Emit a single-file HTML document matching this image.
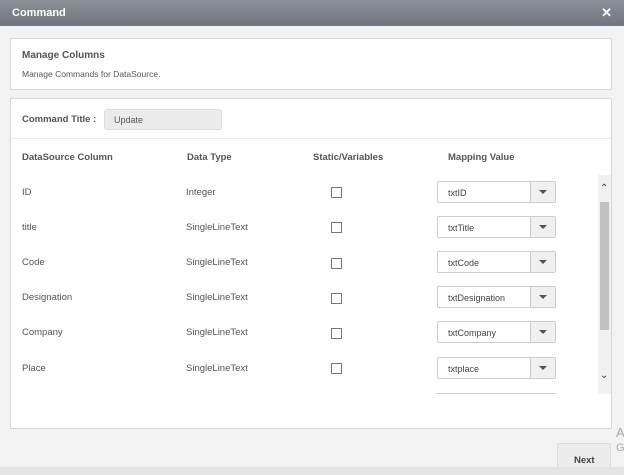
<!DOCTYPE html>
<html><head><style>
*{margin:0;padding:0;box-sizing:border-box}
body{width:624px;height:475px;overflow:hidden;background:#f3f3f3;font-family:"Liberation Sans",sans-serif;color:#555;position:relative}
.hdr{position:absolute;left:0;top:0;width:624px;height:26px;background:linear-gradient(#8a8f98,#6f747e);color:#fff;font-size:11px;font-weight:bold}
.hdr span{position:absolute;left:12px;top:7px}
.hdr b{position:absolute;right:12px;top:5px;font-size:13px}
.p{position:absolute;left:10px;width:602px;background:#fff;border:1px solid #d6d6d6;border-radius:2px}
.t{position:absolute;font-size:9.5px;white-space:nowrap}
.h{font-weight:bold;color:#555}
.cb{position:absolute;left:331px;width:11px;height:11px;border:1px solid #777;background:#fff}
.dd{position:absolute;left:437px;width:119px;height:22px;border:1px solid #ccc;border-radius:2px;background:#fff}
.dd span{position:absolute;left:10px;top:6px;font-size:9px;color:#444}
.dd i{position:absolute;right:0;top:0;width:25px;height:20px;background:#f0f0f0;border-left:1px solid #ccc}
.dd i:after{content:"";position:absolute;left:8px;top:8px;border-left:4px solid transparent;border-right:4px solid transparent;border-top:4px solid #555}
</style></head><body>
<div class="hdr"><span>Command</span><b>✕</b></div>
<div class="p" style="top:38px;height:52px">
<div class="t h" style="left:11px;top:11px;font-size:10px">Manage Columns</div>
<div class="t" style="left:11px;top:30px;font-size:8.5px">Manage Commands for DataSource.</div>
</div>
<div class="p" style="top:98px;height:331px">
<div class="t h" style="left:11px;top:15px">Command Title :</div>
<div style="position:absolute;left:93px;top:10px;width:118px;height:21px;background:#ececec;border:1px solid #ddd;border-radius:3px"><span class="t" style="left:9px;top:5px;font-size:9px">Update</span></div>
<div style="position:absolute;left:0;top:39px;width:600px;height:1px;background:#ececec"></div>
<div style="position:absolute;left:587px;top:76px;width:13px;height:219px;background:#f1f1f1"></div>
<div style="position:absolute;left:589px;top:103px;width:9px;height:128px;background:#c1c1c1"></div>
<div class="t" style="left:589px;top:84px;font-size:10px;color:#333">&#8963;</div>
<div class="t" style="left:589px;top:271px;font-size:10px;color:#333">&#8964;</div>
</div>
<div class="t h" style="left:22px;top:152px">DataSource Column</div>
<div class="t h" style="left:187px;top:152px">Data Type</div>
<div class="t h" style="left:313px;top:152px">Static/Variables</div>
<div class="t h" style="left:448px;top:152px">Mapping Value</div>

<div class="t" style="left:22px;top:187px">ID</div><div class="t" style="left:186px;top:187px">Integer</div><div class="cb" style="top:187px"></div><div class="dd" style="top:181px"><span>txtID</span><i></i></div>
<div class="t" style="left:22px;top:222px">title</div><div class="t" style="left:186px;top:222px">SingleLineText</div><div class="cb" style="top:222px"></div><div class="dd" style="top:216px"><span>txtTitle</span><i></i></div>
<div class="t" style="left:22px;top:257px">Code</div><div class="t" style="left:186px;top:257px">SingleLineText</div><div class="cb" style="top:258px"></div><div class="dd" style="top:251px"><span>txtCode</span><i></i></div>
<div class="t" style="left:22px;top:292px">Designation</div><div class="t" style="left:186px;top:292px">SingleLineText</div><div class="cb" style="top:293px"></div><div class="dd" style="top:286px"><span>txtDesignation</span><i></i></div>
<div class="t" style="left:22px;top:327px">Company</div><div class="t" style="left:186px;top:327px">SingleLineText</div><div class="cb" style="top:328px"></div><div class="dd" style="top:321px"><span>txtCompany</span><i></i></div>
<div class="t" style="left:22px;top:363px">Place</div><div class="t" style="left:186px;top:363px">SingleLineText</div><div class="cb" style="top:363px"></div><div class="dd" style="top:357px"><span>txtplace</span><i></i></div>
<div style="position:absolute;left:437px;top:393px;width:118px;height:1px;background:#ccc"></div>

<div style="position:absolute;left:557px;top:443px;width:54px;height:32px;background:#ececec;border:1px solid #ddd"><span class="t h" style="left:16px;top:11px;color:#444">Next</span></div>
<div style="position:absolute;left:0;top:467px;width:624px;height:8px;background:#e4e4e4"></div>
<div class="t" style="left:616px;top:425px;font-size:13px;color:#aaa">A</div>
<div class="t" style="left:616px;top:442px;font-size:11px;color:#aaa">G</div>
</body></html>
